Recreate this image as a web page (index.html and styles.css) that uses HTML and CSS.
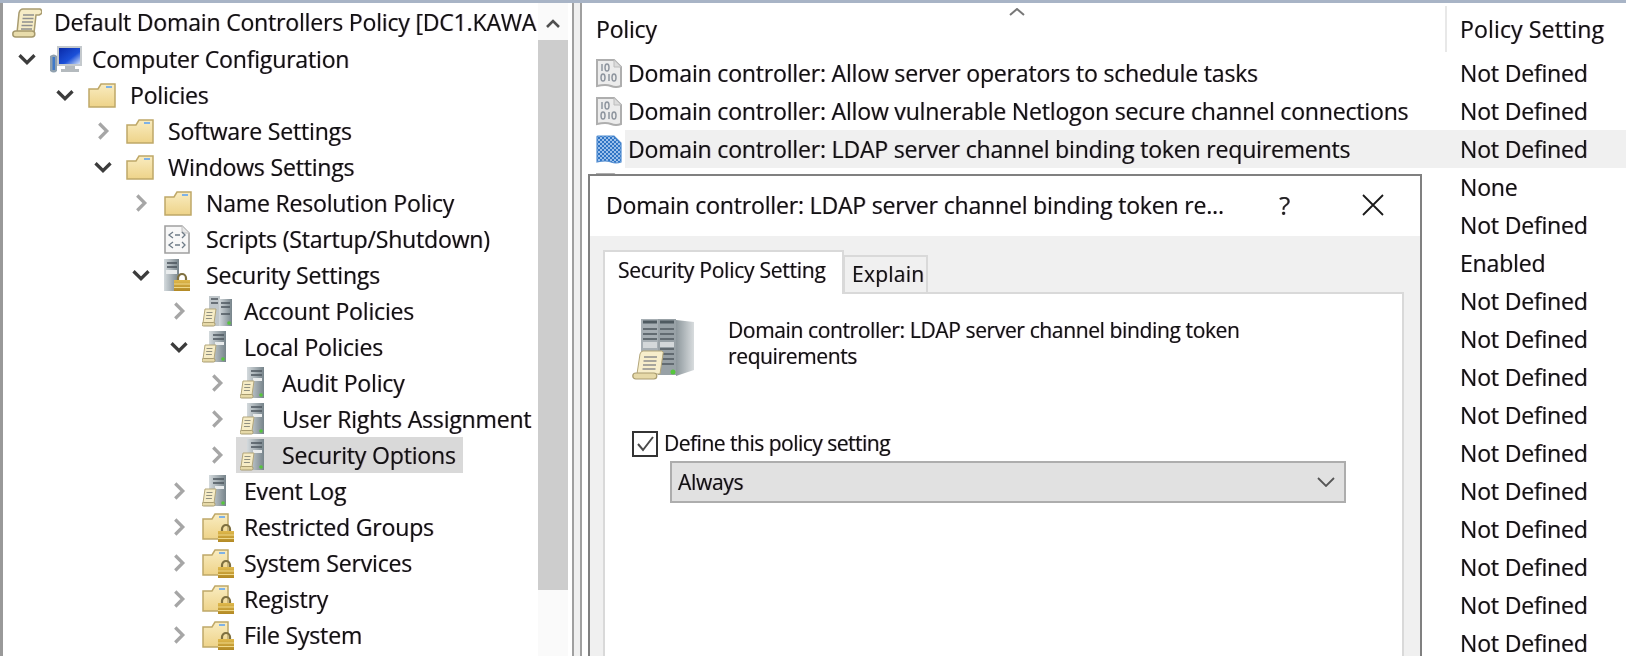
FILE: index.html
```html
<!DOCTYPE html>
<html lang="en">
<head>
<meta charset="utf-8">
<title>Group Policy Management Editor</title>
<link rel="stylesheet" href="styles.css">
</head>
<body>
<svg class="defs" aria-hidden="true">
  <defs>
    <linearGradient id="gFolder" x1="0" y1="0" x2="0" y2="1"><stop offset="0" stop-color="#f9ecc0"/><stop offset="1" stop-color="#eed389"/></linearGradient>
    <linearGradient id="gTower" x1="0" y1="0" x2="1" y2="0"><stop offset="0" stop-color="#d4dadd"/><stop offset="1" stop-color="#77848b"/></linearGradient>
    <linearGradient id="gGold" x1="0" y1="0" x2="0" y2="1"><stop offset="0" stop-color="#e0b94c"/><stop offset="1" stop-color="#b28925"/></linearGradient>
    <linearGradient id="gScreen" x1="0" y1="0" x2="1" y2="1"><stop offset="0" stop-color="#0a2aa8"/><stop offset=".6" stop-color="#1b50d8"/><stop offset="1" stop-color="#cfe0fb"/></linearGradient>
    <linearGradient id="gSide" x1="0" y1="0" x2="1" y2="0"><stop offset="0" stop-color="#8d979c"/><stop offset="1" stop-color="#d8dcde"/></linearGradient>
    <pattern id="pCheck" width="4" height="4" patternUnits="userSpaceOnUse"><rect width="4" height="4" fill="#9cc0ea"/><rect width="2" height="2" fill="#2f74c4"/><rect x="2" y="2" width="2" height="2" fill="#2f74c4"/></pattern>
    <g id="lockShape">
      <path d="M4 8V5a4 4 0 0 1 8 0v3" fill="none" stroke="#7f7040" stroke-width="2.200"/>
      <rect x="0" y="7" width="16" height="11" fill="url(#gGold)"/>
      <path d="M0 11h16M0 14.500h16" stroke="#efd888" stroke-width="1.200"/>
    </g>
    <g id="scrollShape">
      <path d="M3 1h11l-2 14H1z" fill="#f6ecc6" stroke="#b3a67a"/>
      <rect x="0" y="14.500" width="13" height="3.500" rx="1.500" fill="#e6d9a8" stroke="#a99c70"/>
      <path d="M4.500 4.500h6M4.200 7.500h6M3.900 10.500h6" stroke="#8f8f80"/>
    </g>
  </defs>
  <symbol id="iScroll" viewBox="0 0 30 30">
    <path d="M7 5q1-4 4-4h17q2 1 2 3t-3 3l-3 0-2 18H5z" fill="#f6ecc6" stroke="#a99c70" stroke-width="1.500"/>
    <rect x=".8" y="23" width="22" height="6" rx="3" fill="#e8dcab" stroke="#a5986c" stroke-width="1.500"/>
    <path d="M11 7h11M10.500 10.500h11M10 14h11M9.500 17.500h11M9 21h11" stroke="#8f8f8f" stroke-width="1.500"/>
  </symbol>
  <symbol id="iComputer" viewBox="0 0 32 27">
    <path d="M7 0h25v20H7z" fill="#c4c9cd"/>
    <path d="M9 2h21v16H9z" fill="url(#gScreen)"/>
    <path d="M15 20h10v3h4v3H11v-3h4z" fill="#b4babe"/>
    <path d="M0 10q4-3 7 0v15q-3 3-7 0z" fill="#8fa0ae"/>
    <path d="M2.500 11v13h2.500V11z" fill="#3f79c8"/>
  </symbol>
  <symbol id="iFolder" viewBox="0 0 28 25">
    <path d="M1 24V6h9l3-5h14v23z" fill="url(#gFolder)" stroke="#bfa868" stroke-width="1.500"/>
    <path d="M18 3h6v2h-6z" fill="#7fb2e6"/>
  </symbol>
  <symbol id="iFolderLock" viewBox="0 0 32 29">
    <path d="M1 26V6h9l3-5h13v25z" fill="url(#gFolder)" stroke="#bfa868" stroke-width="1.500"/>
    <path d="M17 3h6v2h-6z" fill="#7fb2e6"/>
    <use href="#lockShape" x="16" y="11"/>
  </symbol>
  <symbol id="iScript" viewBox="0 0 26 29">
    <path d="M1 1h17l7 7v20H1z" fill="#f7f7f7" stroke="#a0a0a0" stroke-width="1.600"/>
    <path d="M18 1v7h7" fill="#e8e8e8" stroke="#c0c0c0"/>
    <path d="M9 7l-4 3 4 3M11 10h5M18 7l3 3-3 3M9 17l-4 3 4 3M11 20h5M18 17l3 3-3 3" fill="none" stroke="#6f7c88" stroke-width="1.300"/>
  </symbol>
  <symbol id="iSecurity" viewBox="0 0 26 33">
    <rect x="0" y="0" width="15" height="32" fill="url(#gTower)"/>
    <path d="M3 4h10M3 8h10" stroke="#48525a" stroke-width="1.500"/>
    <rect x="2" y="11" width="11" height="4" fill="#e9eced"/>
    <use href="#lockShape" x="10" y="14"/>
  </symbol>
  <symbol id="iServerTwo" viewBox="0 0 30 32">
    <rect x="7" y="1" width="11" height="30" fill="#c0c7cb"/>
    <rect x="17" y="4" width="13" height="27" fill="url(#gTower)"/>
    <path d="M9 4h7M9 8h7M19 8h9M19 12h9M19 19h9" stroke="#4c565d" stroke-width="1.500"/>
    <circle cx="27" cy="28" r="1.800" fill="#55c63c"/>
    <use href="#scrollShape" x="0" y="13"/>
  </symbol>
  <symbol id="iServerOne" viewBox="0 0 24 32">
    <rect x="7" y="0" width="17" height="31" fill="url(#gTower)"/>
    <path d="M11 4h11M11 8h11" stroke="#4c565d" stroke-width="1.500"/>
    <rect x="13" y="11" width="9" height="3" fill="#e9eced"/>
    <circle cx="21" cy="28" r="1.800" fill="#55c63c"/>
    <use href="#scrollShape" x="0" y="13"/>
  </symbol>
  <symbol id="iBinary" viewBox="0 0 26 29">
    <path d="M1 1h17l7 7v19q-5 2-10 0t-14 0z" fill="#ececec" stroke="#aeaeae" stroke-width="2"/>
    <path d="M18 1v7h7" fill="#dcdcdc" stroke="#bcbcbc"/>
    <g fill="none" stroke="#8f969f" stroke-width="1.500">
      <path d="M6 5v7M13 15v7"/>
      <ellipse cx="11" cy="8.500" rx="2" ry="3.500"/>
      <ellipse cx="7" cy="18.500" rx="2" ry="3.500"/>
      <ellipse cx="18" cy="18.500" rx="2" ry="3.500"/>
    </g>
  </symbol>
  <symbol id="iBinarySel" viewBox="0 0 26 29">
    <path d="M1 2q0-1 1-1h16l7 7v19q-5 2-10 0t-14 0z" fill="url(#pCheck)" stroke="#4f8bd0" stroke-width="1.200"/>
  </symbol>
  <symbol id="iBigServer" viewBox="0 0 62 62">
    <rect x="9" y="1" width="19" height="46" fill="#a7afb4"/>
    <rect x="26" y="1" width="18" height="56" fill="#98a1a6"/>
    <path d="M44 2l18 2v48l-18 6z" fill="url(#gSide)"/>
    <path d="M11 4h14M28 4h14" stroke="#4f5a60" stroke-width="3"/>
    <path d="M11 11h14M11 16h14M11 21h14M28 11h14M28 16h14M28 21h14M28 31h14M28 36h14M28 41h14M28 46h14" stroke="#626b71" stroke-width="2"/>
    <rect x="11" y="24" width="14" height="6" fill="#d4d8da"/>
    <rect x="28" y="24" width="14" height="5" fill="#d4d8da"/>
    <circle cx="41" cy="54" r="2.500" fill="#55c63c"/>
    <path d="M8 36q1-3 3-3h19q2 1 1 3l-3 20H5z" fill="#f7eecb" stroke="#b3a67a"/>
    <rect x=".8" y="55" width="24" height="6" rx="3" fill="#e6d9a8" stroke="#a99c70" stroke-width="1.200"/>
    <path d="M12 39h13M11.500 43h13M11 47h13M10.500 51h13" stroke="#8f8f8f" stroke-width="1.700"/>
  </symbol>
  <symbol id="iChevDown" viewBox="0 0 16 16"><path d="M2 5l6 6 6-6" fill="none" stroke="#3c3c3c" stroke-width="2.600"/></symbol>
  <symbol id="iChevRight" viewBox="0 0 16 16"><path d="M5 2l6 6-6 6" fill="none" stroke="#a6a6a6" stroke-width="2.600"/></symbol>
</svg>

<div class="page">
  <section class="tree-panel">
    <div class="tree">
      <div class="tree-root">
        <svg class="ico ico-scroll"><use href="#iScroll"/></svg>
        <span class="root-label">Default Domain Controllers Policy [DC1.KAWA</span>
      </div>
      <div class="node d0"><svg class="exp"><use href="#iChevDown"/></svg><span class="slot"><svg class="ico ico-computer"><use href="#iComputer"/></svg></span><span class="lbl">Computer Configuration</span></div>
      <div class="node d1"><svg class="exp"><use href="#iChevDown"/></svg><span class="slot"><svg class="ico ico-folder"><use href="#iFolder"/></svg></span><span class="lbl">Policies</span></div>
      <div class="node d2"><svg class="exp"><use href="#iChevRight"/></svg><span class="slot"><svg class="ico ico-folder"><use href="#iFolder"/></svg></span><span class="lbl">Software Settings</span></div>
      <div class="node d2"><svg class="exp"><use href="#iChevDown"/></svg><span class="slot"><svg class="ico ico-folder"><use href="#iFolder"/></svg></span><span class="lbl">Windows Settings</span></div>
      <div class="node d3"><svg class="exp"><use href="#iChevRight"/></svg><span class="slot"><svg class="ico ico-folder"><use href="#iFolder"/></svg></span><span class="lbl">Name Resolution Policy</span></div>
      <div class="node d3"><span class="exp"></span><span class="slot"><svg class="ico ico-script"><use href="#iScript"/></svg></span><span class="lbl">Scripts (Startup/Shutdown)</span></div>
      <div class="node d3"><svg class="exp"><use href="#iChevDown"/></svg><span class="slot"><svg class="ico ico-security"><use href="#iSecurity"/></svg></span><span class="lbl">Security Settings</span></div>
      <div class="node d4"><svg class="exp"><use href="#iChevRight"/></svg><span class="slot"><svg class="ico ico-two"><use href="#iServerTwo"/></svg></span><span class="lbl">Account Policies</span></div>
      <div class="node d4"><svg class="exp"><use href="#iChevDown"/></svg><span class="slot"><svg class="ico ico-one"><use href="#iServerOne"/></svg></span><span class="lbl">Local Policies</span></div>
      <div class="node d5"><svg class="exp"><use href="#iChevRight"/></svg><span class="slot"><svg class="ico ico-one"><use href="#iServerOne"/></svg></span><span class="lbl">Audit Policy</span></div>
      <div class="node d5"><svg class="exp"><use href="#iChevRight"/></svg><span class="slot"><svg class="ico ico-one"><use href="#iServerOne"/></svg></span><span class="lbl">User Rights Assignment</span></div>
      <div class="node d5"><svg class="exp"><use href="#iChevRight"/></svg><span class="sel"><span class="slot"><svg class="ico ico-one"><use href="#iServerOne"/></svg></span><span class="lbl">Security Options</span></span></div>
      <div class="node d4"><svg class="exp"><use href="#iChevRight"/></svg><span class="slot"><svg class="ico ico-one"><use href="#iServerOne"/></svg></span><span class="lbl">Event Log</span></div>
      <div class="node d4"><svg class="exp"><use href="#iChevRight"/></svg><span class="slot"><svg class="ico ico-flock"><use href="#iFolderLock"/></svg></span><span class="lbl">Restricted Groups</span></div>
      <div class="node d4"><svg class="exp"><use href="#iChevRight"/></svg><span class="slot"><svg class="ico ico-flock"><use href="#iFolderLock"/></svg></span><span class="lbl">System Services</span></div>
      <div class="node d4"><svg class="exp"><use href="#iChevRight"/></svg><span class="slot"><svg class="ico ico-flock"><use href="#iFolderLock"/></svg></span><span class="lbl">Registry</span></div>
      <div class="node d4"><svg class="exp"><use href="#iChevRight"/></svg><span class="slot"><svg class="ico ico-flock"><use href="#iFolderLock"/></svg></span><span class="lbl">File System</span></div>
      <div class="node d4"><span class="exp"></span><span class="slot"><svg class="ico ico-flock"><use href="#iFolderLock"/></svg></span></div>
    </div>
    <div class="scrollbar">
      <div class="sb-btn"><svg class="sb-arrow" viewBox="0 0 16 10"><path d="M2 8l6-6 6 6" fill="none" stroke="#505050" stroke-width="2.600"/></svg></div>
      <div class="sb-thumb"></div>
    </div>
  </section>

  <section class="list-panel">
    <header class="list-head">
      <svg class="sort-mark" viewBox="0 0 16 8"><path d="M1 7l7-6 7 6" fill="none" stroke="#777" stroke-width="2"/></svg>
      <div class="col-name">Policy</div>
      <div class="col-setting">Policy Setting</div>
    </header>
    <div class="row"><span class="row-ico"><svg class="ico ico-doc"><use href="#iBinary"/></svg></span><div class="row-body"><div class="cell-name">Domain controller: Allow server operators to schedule tasks</div><div class="cell-set">Not Defined</div></div></div>
    <div class="row"><span class="row-ico"><svg class="ico ico-doc"><use href="#iBinary"/></svg></span><div class="row-body"><div class="cell-name">Domain controller: Allow vulnerable Netlogon secure channel connections</div><div class="cell-set">Not Defined</div></div></div>
    <div class="row"><span class="row-ico"><svg class="ico ico-doc"><use href="#iBinarySel"/></svg></span><div class="row-body is-current"><div class="cell-name">Domain controller: LDAP server channel binding token requirements</div><div class="cell-set">Not Defined</div></div></div>
    <div class="row"><span class="row-ico"><svg class="ico ico-doc"><use href="#iBinary"/></svg></span><div class="row-body"><div class="cell-name"></div><div class="cell-set">None</div></div></div>
    <div class="row"><span class="row-ico"></span><div class="row-body"><div class="cell-name"></div><div class="cell-set">Not Defined</div></div></div>
    <div class="row"><span class="row-ico"></span><div class="row-body"><div class="cell-name"></div><div class="cell-set">Enabled</div></div></div>
    <div class="row"><span class="row-ico"></span><div class="row-body"><div class="cell-name"></div><div class="cell-set">Not Defined</div></div></div>
    <div class="row"><span class="row-ico"></span><div class="row-body"><div class="cell-name"></div><div class="cell-set">Not Defined</div></div></div>
    <div class="row"><span class="row-ico"></span><div class="row-body"><div class="cell-name"></div><div class="cell-set">Not Defined</div></div></div>
    <div class="row"><span class="row-ico"></span><div class="row-body"><div class="cell-name"></div><div class="cell-set">Not Defined</div></div></div>
    <div class="row"><span class="row-ico"></span><div class="row-body"><div class="cell-name"></div><div class="cell-set">Not Defined</div></div></div>
    <div class="row"><span class="row-ico"></span><div class="row-body"><div class="cell-name"></div><div class="cell-set">Not Defined</div></div></div>
    <div class="row"><span class="row-ico"></span><div class="row-body"><div class="cell-name"></div><div class="cell-set">Not Defined</div></div></div>
    <div class="row"><span class="row-ico"></span><div class="row-body"><div class="cell-name"></div><div class="cell-set">Not Defined</div></div></div>
    <div class="row"><span class="row-ico"></span><div class="row-body"><div class="cell-name"></div><div class="cell-set">Not Defined</div></div></div>
    <div class="row"><span class="row-ico"></span><div class="row-body"><div class="cell-name"></div><div class="cell-set">Not Defined</div></div></div>
  </section>

  <div class="dialog" role="dialog">
    <div class="dlg-title">
      <span class="dlg-caption">Domain controller: LDAP server channel binding token re...</span>
      <span class="dlg-help">?</span>
      <svg class="dlg-close" viewBox="0 0 22 22"><path d="M1 1l20 20M21 1L1 21" stroke="#1a1a1a" stroke-width="1.800"/></svg>
    </div>
    <div class="dlg-body">
      <div class="tabs">
        <div class="tab tab-active">Security Policy Setting</div>
        <div class="tab tab-idle">Explain</div>
      </div>
      <div class="tab-panel">
        <div class="desc">
          <svg class="big-server"><use href="#iBigServer"/></svg>
          <p class="desc-text">Domain controller: LDAP server channel binding token<br>requirements</p>
        </div>
        <label class="define">
          <span class="check"><svg viewBox="0 0 20 20"><path d="M3 10l5 6L18 3" fill="none" stroke="#4a4a4a" stroke-width="2"/></svg></span>
          <span class="define-text">Define this policy setting</span>
        </label>
        <div class="combo">
          <span class="combo-value">Always</span>
          <svg class="combo-arrow" viewBox="0 0 18 10"><path d="M1 1l8 8 8-8" fill="none" stroke="#555" stroke-width="1.800"/></svg>
        </div>
      </div>
    </div>
  </div>
</div>
</body>
</html>
```

FILE: styles.css
```css
* { box-sizing: border-box; }

html, body {
  margin: 0;
  height: 656px;
  overflow: hidden;
  background: #f0f0f0;
}

.defs { position: absolute; width: 0; height: 0; }

.page {
  position: relative;
  display: flex;
  width: 1626px;
  height: 656px;
  overflow: hidden;
  border-top: 3px solid #a8b4c6;
  font-family: "Open Sans", "Noto Sans", sans-serif;
  font-size: 23px;
  letter-spacing: -.17px;
  color: #111;
  text-shadow: .6px 0 rgba(30, 30, 140, .4), -.6px 0 rgba(190, 110, 30, .3);
  filter: blur(.45px);
}

.ico { display: block; flex: none; }
.ico-scroll { width: 30px; height: 30px; }
.ico-computer { width: 32px; height: 27px; }
.ico-folder { width: 28px; height: 25px; }
.ico-flock { width: 32px; height: 29px; }
.ico-script { width: 26px; height: 29px; }
.ico-security { width: 26px; height: 33px; }
.ico-two { width: 30px; height: 32px; }
.ico-one { width: 24px; height: 32px; }
.ico-doc { width: 26px; height: 29px; }

/* Tree pane */
.tree-panel {
  display: flex;
  flex: none;
  width: 574px;
  background: #fff;
  border-left: 3px solid #999;
  border-right: 2px solid #a0a0a0;
}

.tree { flex: 1; min-width: 0; overflow: hidden; padding-top: 2px; }

.tree-root {
  display: flex;
  align-items: center;
  gap: 12px;
  height: 36px;
  padding-left: 9px;
}

.root-label { white-space: nowrap; overflow: hidden; flex: 1; padding-bottom: 2px; }

.node { display: flex; align-items: center; height: 36px; white-space: nowrap; }
.d0 { padding-left: 14px; }
.d1 { padding-left: 52px; }
.d2 { padding-left: 90px; }
.d3 { padding-left: 128px; }
.d4 { padding-left: 166px; }
.d5 { padding-left: 204px; }

.exp { display: block; flex: none; width: 20px; height: 20px; margin-right: 13px; }
.slot { display: flex; align-items: center; flex: none; width: 42px; height: 36px; }

.sel { display: flex; align-items: center; height: 36px; margin-left: -4px; padding: 0 7px 0 4px; background: #d9d9d9; }

.scrollbar { flex: none; width: 30px; margin-right: 4px; background: #fafafa; }
.sb-btn { display: flex; align-items: center; justify-content: center; height: 37px; padding-top: 5px; }
.sb-arrow { width: 16px; height: 10px; }
.sb-thumb { height: 550px; background: #cdcdcd; }

/* Policy list */
.list-panel {
  flex: none;
  width: 1046px;
  margin-left: 6px;
  background: #fff;
  border-left: 2px solid #a0a0a0;
  overflow: hidden;
}

.list-head { position: relative; display: flex; height: 51px; align-items: center; padding-top: 1px; }
.sort-mark { position: absolute; left: 427px; top: 5px; width: 16px; height: 8px; }
.col-name { flex: none; width: 865px; padding-left: 14px; height: 46px; line-height: 46px; border-right: 2px solid #e8e8e8; }
.col-setting { padding-left: 13px; line-height: 46px; letter-spacing: .15px; }

.row { display: flex; align-items: stretch; height: 38px; }
.row-ico { display: flex; align-items: center; flex: none; width: 43px; padding-left: 14px; }
.row-body { display: flex; flex: 1; align-items: center; white-space: nowrap; }
.is-current { background: #f0f0f0; }
.cell-name { flex: none; width: 823px; padding-left: 3px; }
.cell-set { padding-left: 12px; }

/* Properties dialog */
.dialog {
  position: absolute;
  left: 588px;
  top: 171px;
  width: 834px;
  height: 500px;
  display: flex;
  flex-direction: column;
  background: #f0f0f0;
  border: 2px solid #808080;
  border-bottom: 0;
}

.dlg-title { display: flex; align-items: center; flex: none; height: 60px; padding: 0 0 3px 16px; background: #fff; }
.dlg-caption { flex: none; width: 673px; white-space: nowrap; }
.dlg-help { flex: none; width: 30px; font-size: 26px; color: #222; }
.dlg-close { flex: none; width: 22px; height: 22px; margin-left: 53px; }

.dlg-body { flex: 1; padding: 14px 16px 0 13px; font-size: 21px; letter-spacing: -.37px; }

.tabs { display: flex; align-items: flex-end; height: 42px; }
.tab { display: flex; align-items: center; border: 2px solid #d9d9d9; border-bottom: 0; }
.tab-active { height: 44px; width: 241px; padding-left: 13px; padding-bottom: 6px; background: #fff; position: relative; z-index: 1; margin-bottom: -2px; letter-spacing: -.25px; }
.tab-idle { height: 37px; width: 85px; margin-left: -1px; padding: 0 0 2px 7px; background: #f0f0f0; letter-spacing: .25px; }

.tab-panel { height: 400px; background: #fff; border: 2px solid #d9d9d9; padding: 24px 0 0 27px; }

.desc { display: flex; align-items: flex-start; }
.big-server { display: block; flex: none; width: 62px; height: 62px; }
.desc-text { margin: -1px 0 0 34px; line-height: 26px; }

.define { display: flex; align-items: center; margin-top: 51px; height: 26px; }
.check { display: flex; align-items: center; justify-content: center; flex: none; width: 26px; height: 26px; margin-right: 6px; border: 2px solid #333; background: #fff; }
.check svg { width: 20px; height: 20px; }
.define-text { padding-bottom: 2px; letter-spacing: -.5px; }

.combo { display: flex; align-items: center; justify-content: space-between; width: 676px; height: 42px; margin: 4px 0 0 38px; padding: 0 9px 0 6px; background: #e1e1e1; border: 2px solid #adadad; }
.combo-value { letter-spacing: -.3px; }
.combo-arrow { width: 18px; height: 10px; }
```
